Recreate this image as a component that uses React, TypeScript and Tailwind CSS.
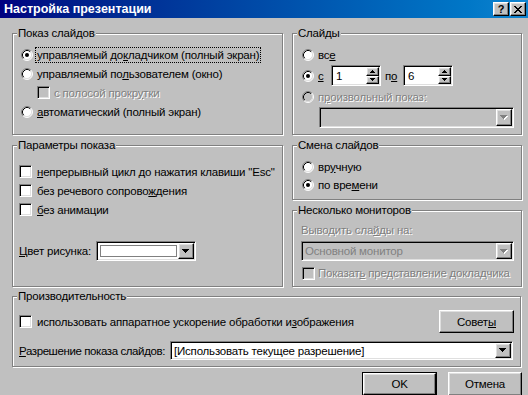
import React from 'react';

const raised =
  'bg-[#c0c0c0] border border-t-white border-l-white border-r-black border-b-black shadow-[inset_-1px_-1px_0_#808080,inset_1px_1px_0_#dfdfdf]';
const sunken =
  'border border-t-[#808080] border-l-[#808080] border-r-white border-b-white shadow-[inset_1px_1px_0_#000,inset_-1px_-1px_0_#dfdfdf]';
const dim = 'text-[#808080] [text-shadow:1px_1px_0_#fff]';

const DownArrow = ({ disabled = false }: { disabled?: boolean }) => {
  const d = 'M0 0h7v1H0z M1 1h5v1H1z M2 2h3v1H2z M3 3h1v1H3z';
  return (
    <svg width="8" height="5" viewBox="0 0 8 5" shapeRendering="crispEdges">
      {disabled && <path d={d} fill="#fff" transform="translate(1 1)" />}
      <path d={d} fill={disabled ? '#808080' : '#000'} />
    </svg>
  );
};

const Radio = ({ checked = false, disabled = false }: { checked?: boolean; disabled?: boolean }) => (
  <svg width="12" height="12" viewBox="0 0 12 12" className="shrink-0">
    <circle cx="6" cy="6" r="5" fill={disabled ? '#c0c0c0' : '#fff'} />
    <path d="M2.11 9.89 A5.5 5.5 0 0 1 9.89 2.11" stroke="#808080" fill="none" />
    <path d="M9.89 2.11 A5.5 5.5 0 0 1 2.11 9.89" stroke="#fff" fill="none" />
    <path d="M2.82 9.18 A4.5 4.5 0 0 1 9.18 2.82" stroke="#000" fill="none" />
    <path d="M9.18 2.82 A4.5 4.5 0 0 1 2.82 9.18" stroke="#dfdfdf" fill="none" />
    {checked && <circle cx="6" cy="6" r="2" fill={disabled ? '#808080' : '#000'} />}
  </svg>
);

const Check = ({ disabled = false }: { disabled?: boolean }) => (
  <span className={`block w-[13px] h-[13px] shrink-0 ${sunken} ${disabled ? 'bg-[#c0c0c0]' : 'bg-white'}`} />
);

const Combo = ({
  text,
  disabled = false,
  className = '',
  children,
}: {
  text?: string;
  disabled?: boolean;
  className?: string;
  children?: React.ReactNode;
}) => (
  <div className={`flex p-[1px] ${sunken} ${disabled ? 'bg-[#c0c0c0]' : 'bg-white'} ${className}`}>
    <div className={`flex-1 flex items-center pl-[2px] overflow-hidden whitespace-nowrap ${disabled ? 'text-[#808080]' : ''}`}>
      {children ?? text}
    </div>
    <div className={`w-[16px] flex items-center justify-center ${raised}`}>
      <DownArrow disabled={disabled} />
    </div>
  </div>
);

const Spin = ({ value, className = '' }: { value: string; className?: string }) => (
  <div className={`flex h-[21px] w-[50px] p-[1px] bg-white ${sunken} ${className}`}>
    <div className="flex-1 flex items-center pl-[3px]">{value}</div>
    <div className="w-[13px] flex flex-col">
      <div className={`flex-1 flex items-center justify-center ${raised}`}>
        <svg width="5" height="3" viewBox="0 0 5 3" shapeRendering="crispEdges">
          <path d="M2 0h1v1H2z M1 1h3v1H1z M0 2h5v1H0z" fill="#000" />
        </svg>
      </div>
      <div className={`flex-1 flex items-center justify-center ${raised}`}>
        <svg width="5" height="3" viewBox="0 0 5 3" shapeRendering="crispEdges">
          <path d="M0 0h5v1H0z M1 1h3v1H1z M2 2h1v1H2z" fill="#000" />
        </svg>
      </div>
    </div>
  </div>
);

const Group = ({
  title,
  className = '',
  children,
}: {
  title: string;
  className?: string;
  children?: React.ReactNode;
}) => (
  <div className={`relative border border-[#808080] shadow-[inset_1px_1px_0_#fff,1px_1px_0_#fff] ${className}`}>
    <span className="absolute -top-[8px] left-[4px] bg-[#c0c0c0] px-[1px] leading-[14px] whitespace-nowrap">
      {title}
    </span>
    {children}
  </div>
);

const Button = ({ children, isDefault = false, className = '' }: { children: React.ReactNode; isDefault?: boolean; className?: string }) =>
  isDefault ? (
    <div className={`border border-black ${className}`}>
      <div className={`h-full flex items-center justify-center ${raised}`}>{children}</div>
    </div>
  ) : (
    <div className={`flex items-center justify-center ${raised} ${className}`}>{children}</div>
  );

export default function App() {
  return (
    <div className="w-[528px] h-[395px] overflow-hidden bg-[#c0c0c0] text-black text-[11.5px] tracking-[-0.2px] leading-[14px] font-['Liberation_Sans',Arial,sans-serif]">
      {/* Title bar */}
      <div className="h-[18px] flex items-center justify-between bg-gradient-to-r from-[#000080] to-[#1084d0] pl-[4px] pr-[2px]">
        <span className="text-white font-bold text-[12.5px] tracking-normal leading-[16px] whitespace-nowrap">Настройка презентации</span>
        <div className="flex">
          <div className={`w-[16px] h-[14px] flex items-center justify-center ${raised}`}>
            <span className="font-bold text-[11px] leading-[11px]">?</span>
          </div>
          <div className={`w-[16px] h-[14px] ml-[1px] flex items-center justify-center ${raised}`}>
            <svg width="8" height="7" viewBox="0 0 8 7" shapeRendering="crispEdges">
              <path d="M0 0h2v1H0z M6 0h2v1H6z M1 1h2v1H1z M5 1h2v1H5z M2 2h4v1H2z M3 3h2v1H3z M2 4h4v1H2z M1 5h2v1H1z M5 5h2v1H5z M0 6h2v1H0z M6 6h2v1H6z" fill="#000" />
            </svg>
          </div>
        </div>
      </div>

      <div className="pl-[12px] pt-[15px]">
        {/* Row 1 */}
        <div className="flex gap-[9px]">
          <Group title="Показ слайдов" className="w-[271px] h-[102px]">
            <div className="pt-[11px] pl-[8px] flex flex-col">
              <div className="h-[19px] flex items-center gap-[3px]">
                <Radio checked />
                <span className="px-[1px] outline outline-1 outline-dotted outline-black whitespace-nowrap">
                  управляемый до<u>к</u>ладчиком (полный экран)
                </span>
              </div>
              <div className="h-[19px] flex items-center gap-[4px]">
                <Radio />
                <span className="whitespace-nowrap">управляемый по<u>л</u>ьзователем (окно)</span>
              </div>
              <div className="h-[19px] flex items-center gap-[4px] pl-[16px]">
                <Check disabled />
                <span className={`whitespace-nowrap ${dim}`}>с полосой прокр<u>у</u>тки</span>
              </div>
              <div className="h-[19px] flex items-center gap-[4px]">
                <Radio />
                <span className="whitespace-nowrap"><u>а</u>втоматический (полный экран)</span>
              </div>
            </div>
          </Group>

          <Group title="Слайды" className="w-[230px] h-[102px]">
            <div className="pt-[11px] pl-[9px] flex flex-col">
              <div className="h-[19px] flex items-center gap-[4px]">
                <Radio />
                <span>вс<u>е</u></span>
              </div>
              <div className="h-[21px] mt-[1px] flex items-center">
                <Radio checked />
                <span className="w-[17px] pl-[4px]"><u>с</u></span>
                <Spin value="1" />
                <span className="w-[22px] pl-[4px]">п<u>о</u></span>
                <Spin value="6" />
              </div>
              <div className="h-[18px] mt-[2px] flex items-center gap-[4px]">
                <Radio disabled />
                <span className={`whitespace-nowrap ${dim}`}>п<u>р</u>оизвольный показ:</span>
              </div>
              <Combo disabled className="ml-[17px] mt-[1px] w-[195px] h-[21px]" />
            </div>
          </Group>
        </div>

        {/* Row 2 */}
        <div className="flex gap-[9px] mt-[10px]">
          <Group title="Параметры показа" className="w-[271px] h-[142px]">
            <div className="pt-[16px] pl-[6px] flex flex-col">
              <div className="h-[19px] flex items-center gap-[5px]">
                <Check />
                <span className="whitespace-nowrap"><u>н</u>епрерывный цикл до нажатия клавиши "Esc"</span>
              </div>
              <div className="h-[19px] flex items-center gap-[5px]">
                <Check />
                <span className="whitespace-nowrap">без речевого сопрово<u>ж</u>дения</span>
              </div>
              <div className="h-[19px] flex items-center gap-[5px]">
                <Check />
                <span className="whitespace-nowrap"><u>б</u>ез анимации</span>
              </div>
              <div className="h-[20px] mt-[22px] flex items-center">
                <span className="w-[77px] whitespace-nowrap"><u>Ц</u>вет рисунка:</span>
                <Combo className="w-[100px] h-[20px]">
                  <div className="w-full h-[12px] mr-[1px] border border-[#808080] bg-white" />
                </Combo>
              </div>
            </div>
          </Group>

          <div className="flex flex-col gap-[10px]">
            <Group title="Смена слайдов" className="w-[230px] h-[55px]">
              <div className="pt-[12px] pl-[9px] flex flex-col">
                <div className="h-[18px] flex items-center gap-[4px]">
                  <Radio />
                  <span>вр<u>у</u>чную</span>
                </div>
                <div className="h-[18px] flex items-center gap-[4px]">
                  <Radio checked />
                  <span>по вре<u>м</u>ени</span>
                </div>
              </div>
            </Group>
            <Group title="Несколько мониторов" className="w-[230px] h-[77px]">
              <div className="pt-[12px] pl-[8px] flex flex-col">
                <span className={`h-[14px] whitespace-nowrap ${dim}`}>Выводить сла<u>й</u>ды на:</span>
                <Combo disabled text="Основной монитор" className="mt-[4px] w-[213px] h-[20px]" />
                <div className="h-[18px] mt-[3px] pl-[1px] flex items-center gap-[3px]">
                  <Check disabled />
                  <span className={`whitespace-nowrap ${dim}`}>Показат<u>ь</u> представление докладчика</span>
                </div>
              </div>
            </Group>
          </div>
        </div>

        {/* Row 3 */}
        <Group title="Производительность" className="mt-[9px] w-[509px] h-[71px]">
          <div className="pt-[13px] pl-[6px] pr-[6px] flex flex-col">
            <div className="h-[23px] flex items-center gap-[5px]">
              <Check />
              <span className="flex-1 whitespace-nowrap">использовать аппаратное ускорение обработки и<u>з</u>ображения</span>
              <Button className="w-[75px] h-[23px]">Совет<u>ы</u></Button>
            </div>
            <div className="h-[19px] mt-[8px] flex items-center">
              <span className="w-[151px] whitespace-nowrap tracking-[-0.4px]"><u>Р</u>азрешение показа слайдов:</span>
              <Combo text="[Использовать текущее разрешение]" className="w-[343px] h-[19px]" />
            </div>
          </div>
        </Group>

        {/* Buttons */}
        <div className="flex gap-[11px] mt-[5px] pl-[350px]">
          <Button isDefault className="w-[75px] h-[24px]">OK</Button>
          <Button className="w-[74px] h-[24px]">Отмена</Button>
        </div>
      </div>
    </div>
  );
}
